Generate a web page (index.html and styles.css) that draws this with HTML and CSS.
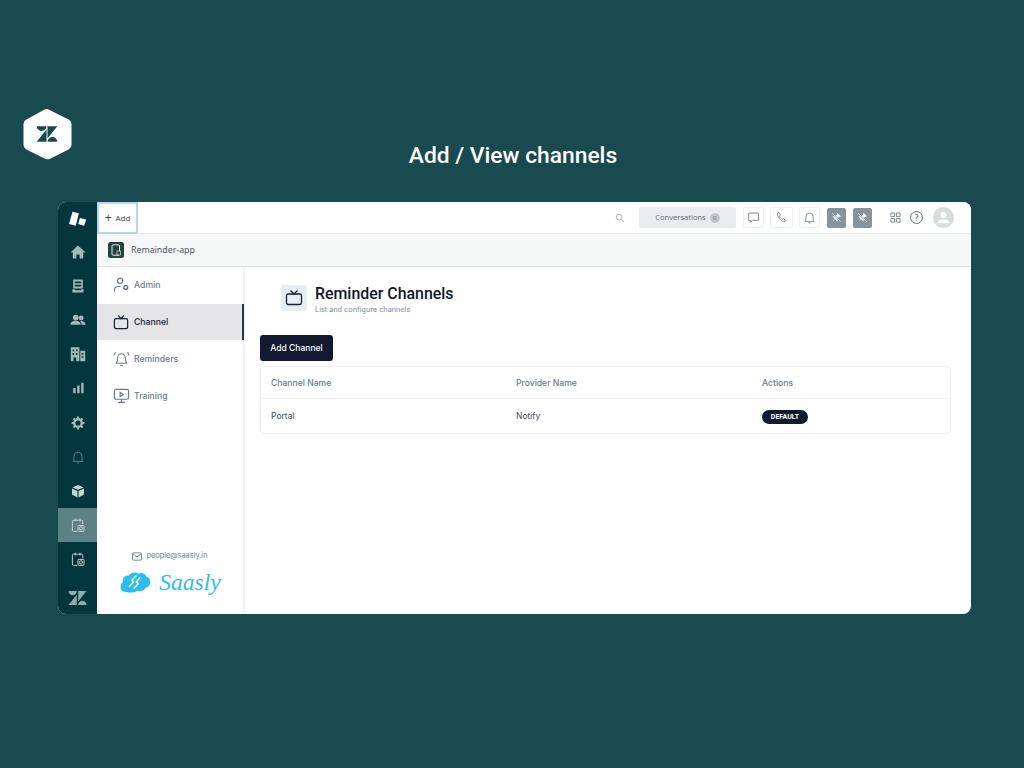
FILE: index.html
```html
<!DOCTYPE html>
<html lang="en">
<head>
<meta charset="utf-8">
<title>Add / View channels</title>
<link rel="stylesheet" href="styles.css">
</head>
<body>
<header class="hero">
  <svg class="hero-logo" viewBox="0 0 50 52"><path d="M25 0.500 47 11.500Q49.500 13 49.500 16V37Q49.500 40 47 41.500L27 51.500Q25 52 23 51.500L3 41.500Q0.500 40 0.500 37V16Q0.500 13 3 11.500L23 .5Z" fill="#fff"/><path d="M14 18h10a5 5 0 0 1-10 0zM24 21.500V34H14zM25 18h10L25 30.500zM25 34a5 5 0 0 1 10 0z" fill="#174a4f"/></svg>
  <h1 class="hero-title">Add / View channels</h1>
</header>
<main class="frame">
  <nav class="rail">
    <div class="rail-item rail-brand"><svg class="rb" viewBox="0 0 20 20"><path d="M4.500 2.800l6.400 1.400-3.200 12.600L1 15z" fill="#fff"/><path d="M11.900 9.100l6.300 1.400-2.100 6.300-5.900-1.800z" fill="#fff"/></svg></div>
    <div class="rail-item"><svg class="ri" viewBox="0 0 20 20"><path d="M10 2 19.500 10.500h-3V18h-4.500v-5H8v5H3.500v-7.500h-3z" fill="#a0b8b9"/></svg></div>
    <div class="rail-item"><svg class="ri" viewBox="0 0 20 20"><path d="M4 2h12v11H4zM6 4.500v2h8v-2zM6 8.500v2h8v-2zM3 14h3.500v1.200h7V14H17v4H3z" fill="#a0b8b9" fill-rule="evenodd"/></svg></div>
    <div class="rail-item"><svg class="ri" viewBox="0 0 20 20"><circle cx="7.200" cy="7" r="3.600" fill="#a0b8b9"/><circle cx="14" cy="7.500" r="3" fill="#a0b8b9"/><path d="M.5 16c0-3.500 3-5 6.700-5s6.300 1.500 6.300 5zM14.500 16c0-2-.8-3.500-2-4.600 3.500-.7 7 .8 7 4.600z" fill="#a0b8b9"/></svg></div>
    <div class="rail-item"><svg class="ri ri-lg" viewBox="0 0 20 20"><path d="M2 2.500h9.500V18H8v-4H5v4H2zM4 5v2h1.700V5zM7.700 5v2h1.700V5zM4 9v2h1.700V9zM7.700 9v2h1.700V9zM12.500 6.500H18V18h-5.500zM14 9v1.800h2V9zM14 12.500v1.800h2v-1.800z" fill="#a0b8b9" fill-rule="evenodd"/></svg></div>
    <div class="rail-item"><svg class="ri" viewBox="0 0 20 20"><path d="M4 10h3v6.500H4zM9 7h3v9.500H9zM14 3.500h3v13h-3z" fill="#a0b8b9"/></svg></div>
    <div class="rail-item rail-gear"><svg class="ri" viewBox="0 0 20 20"><circle cx="10" cy="10" r="4.700" fill="none" stroke="#a0b8b9" stroke-width="3"/><path d="M10 2v3M10 15v3M2 10h3M15 10h3M4.300 4.300l2 2M13.700 13.700l2 2M4.300 15.700l2-2M13.700 6.300l2-2" stroke="#a0b8b9" stroke-width="2.800"/></svg></div>
    <div class="rail-item"><svg class="ri" viewBox="0 0 20 20"><path d="M5 14.500V9a5 5 0 0 1 10 0v5.500l1.500 1h-13zM8.500 17.500h3" fill="none" stroke="#5d8285" stroke-width="1.200"/></svg></div>
    <div class="rail-item"><svg class="ri" viewBox="0 0 20 20"><path d="M10 2.500l7 3L10 8.500 3 5.500zM2.500 7l6.800 3v8l-6.800-3.500zM17.500 7l-6.800 3v8l6.800-3.500z" fill="#c4d3d4"/></svg></div>
    <div class="rail-item rail-active"><svg class="ri" viewBox="0 0 20 20"><use href="#cal"/></svg></div>
    <div class="rail-item"><svg class="ri" viewBox="0 0 20 20"><defs><g id="cal" fill="none" stroke="#c9d6d7" stroke-width="1.200"><path d="M9 18H4.500a1.500 1.500 0 0 1-1.500-1.500V5.500A1.500 1.500 0 0 1 4.500 4h10A1.500 1.500 0 0 1 16 5.500V9M6.500 2v3.500M12.500 2v3.500"/><rect x="10" y="10.500" width="7.500" height="7.500" rx="1.200"/><circle cx="13.700" cy="14.200" r="2"/></g></defs><use href="#cal"/></svg></div>
    <div class="rail-item rail-foot"><svg class="rz" viewBox="0 0 22 16"><path d="M10.200 4.200V16H.6zM10.200 0a4.800 4.800 0 0 1-9.600 0zM11.800 12V0h9.600zM11.800 16a4.800 4.800 0 0 1 9.600 0z" fill="#8fabad"/></svg></div>
  </nav>
  <div class="app">
    <div class="topbar">
      <div class="add-btn"><span class="plus">+</span> Add</div>
      <div class="top-tools">
        <svg class="search" viewBox="0 0 12 12"><circle cx="5" cy="5" r="3.500" fill="none" stroke="#a3a9ad" stroke-width="1"/><path d="M7.700 7.700 11 11" stroke="#a3a9ad" stroke-width="1"/></svg>
        <div class="conv">Conversations <span class="conv-count">0</span></div>
        <div class="tool"><svg class="ti" viewBox="0 0 16 16"><path d="M2 2.500h12v9H7l-2.500 2.500v-2.500H2z" fill="none" stroke="#68737d"/></svg></div>
        <div class="tool tool-wide"><svg class="ti" viewBox="0 0 16 16"><path d="M3 2.500 5 1.800l1.500 3-1.200 1.200c.5 2 2 3.500 3.700 4.300l1.300-1 2.800 2-.8 2c-4.500.5-9.500-5.500-9.300-10.800z" fill="none" stroke="#68737d" stroke-width=".9"/></svg></div>
        <div class="tool tool-last"><svg class="ti" viewBox="0 0 16 16"><path d="M3.500 12V7a4.500 4.500 0 0 1 9 0v5l1.300 1H2.200zM6.500 14.500h3" fill="none" stroke="#68737d" stroke-width=".9"/></svg></div>
        <div class="pin"><svg class="ti" viewBox="0 0 16 16"><path d="M9.500 2.500l4 4-1 .6-1-.3-2 2.200.2 2.500-1 1-2.600-2.700-2.600 2.700 2-3.300-2.200-2.200 1-1 2.500.3 2.200-2.100-.3-1z" fill="#fff"/><path d="M2.500 2.500l11 11" stroke="#87929d" stroke-width="1.800"/><path d="M2.500 2.500l11 11" stroke="#fff" stroke-width=".8"/></svg></div>
        <div class="pin"><svg class="ti" viewBox="0 0 16 16"><path d="M9.500 2.500l4 4-1 .6-1-.3-2 2.200.2 2.500-1 1-2.600-2.700-2.600 2.700 2-3.300-2.200-2.200 1-1 2.500.3 2.200-2.100-.3-1z" fill="#fff"/><path d="M2.500 2.500l11 11" stroke="#87929d" stroke-width="1.800"/><path d="M2.500 2.500l11 11" stroke="#fff" stroke-width=".8"/></svg></div>
        <svg class="grid-ico" viewBox="0 0 12 12"><path d="M1 1h4v4H1zM7 1h4v4H7zM1 7h4v4H1zM7 7h4v4H7z" fill="none" stroke="#68737d" stroke-width=".9"/></svg>
        <span class="help">?</span>
        <div class="avatar"><svg viewBox="0 0 22 22"><circle cx="11" cy="8.500" r="3.200" fill="#fff"/><path d="M5 17c0-3 2.500-4 6-4s6 1 6 4z" fill="#fff"/></svg></div>
      </div>
    </div>
    <div class="subbar">
      <svg class="app-ico" viewBox="0 0 16 16"><rect width="16" height="16" rx="2.500" fill="#24423f"/><rect x="4" y="2.800" width="7.500" height="10.400" rx="1.200" fill="none" stroke="#fff" stroke-width=".9"/><rect x="9" y="9" width="3.500" height="4" fill="#24423f" stroke="#fff" stroke-width=".6"/></svg>
      <span class="app-name">Remainder-app</span>
    </div>
    <div class="body">
      <aside class="side">
        <ul class="menu">
          <li class="menu-item"><svg class="mi" viewBox="0 0 18 18"><circle cx="7.500" cy="4" r="2.800" fill="none" stroke="#68778d" stroke-width="1.200"/><circle cx="13.500" cy="11" r="2" fill="none" stroke="#68778d" stroke-width="1.600"/><path d="M1.500 15.500v-1.500c0-2.500 2-4 4.500-4h2" fill="none" stroke="#68778d" stroke-width="1.200"/></svg><span>Admin</span></li>
          <li class="menu-item menu-on"><svg class="mi" viewBox="0 0 18 18"><rect x="1.500" y="5" width="14" height="10.500" rx="1.800" fill="none" stroke="#1a2233" stroke-width="1.300"/><path d="M5.500 1.500 8.500 5l3-3.500" fill="none" stroke="#1a2233" stroke-width="1.300"/></svg><span>Channel</span></li>
          <li class="menu-item"><svg class="mi" viewBox="0 0 18 18"><path d="M3.500 14c1.200-2 1.500-3 1.500-6a4 4 0 0 1 8 0c0 3 .3 4 1.500 6zM7.500 16.500h3M2.500 2.200 1 6M15.500 2.200 17 6" fill="none" stroke="#68778d" stroke-width="1.100"/></svg><span>Reminders</span></li>
          <li class="menu-item"><svg class="mi" viewBox="0 0 18 18"><rect x="1.500" y="2.500" width="15" height="10.500" rx="1.800" fill="none" stroke="#68778d" stroke-width="1.200"/><path d="M7.500 5.500v4.500l3.500-2.200z" fill="none" stroke="#68778d" stroke-width="1.100"/><path d="M9 13v3M5.500 16.300h7" stroke="#68778d" stroke-width="1.200"/></svg><span>Training</span></li>
        </ul>
        <div class="side-foot">
          <div class="mail"><svg class="mail-ico" viewBox="0 0 11 9"><rect x=".5" y=".5" width="10" height="8" rx="1" fill="none" stroke="#6b7a90"/><path d="M.8 1.500 5.500 5l4.700-3.500" fill="none" stroke="#6b7a90"/></svg>people@saasly.in</div>
          <div class="brand">
            <svg class="cloud" viewBox="0 0 34 26"><path d="M8 24C3 24 .5 21 .8 17.500 1 15.500 2 14 3.500 13 2.500 8.500 6 5.500 10 6 12 2.500 17 1.500 20.500 4c3-1.500 7-.5 8 3 3 1 5 3.500 4.500 7-.5 3-2.500 4.500-4.500 5-2 3.500-6 5-9.500 3.500C16 24.500 11 25 8 24z" fill="#2bbdee"/><path d="M18 6l-5 5 2 2-5 5M22 8l-4 5 2 2-5 5" fill="none" stroke="#fff" stroke-width="1.600"/></svg>
            <span class="brand-name">Saasly</span>
          </div>
        </div>
      </aside>
      <section class="content">
        <div class="page-head">
          <div class="page-ico"><svg viewBox="0 0 18 18"><rect x="1.500" y="5" width="15" height="10.500" rx="1.800" fill="none" stroke="#1a2233" stroke-width="1.300"/><path d="M5.500 1.500 9 5l3.500-3.500" fill="none" stroke="#1a2233" stroke-width="1.300"/></svg></div>
          <div>
            <h2 class="page-title">Reminder Channels</h2>
            <p class="page-sub">List and configure channels</p>
          </div>
        </div>
        <button class="primary">Add Channel</button>
        <div class="table">
          <div class="row row-head"><span>Channel Name</span><span>Provider Name</span><span>Actions</span></div>
          <div class="row row-body"><span>Portal</span><span>Notify</span><span><b class="badge">DEFAULT</b></span></div>
        </div>
      </section>
    </div>
  </div>
</main>
</body>
</html>
```
FILE: styles.css
```css
* { box-sizing: border-box; }
html, body { margin: 0; padding: 0; }
body { width: 1024px; height: 768px; background: #194a4f; overflow: hidden; font-family: Inter, "Liberation Sans", sans-serif; }

.hero { height: 202px; display: grid; grid-template-columns: 1fr auto 1fr; padding: 108px 0 0 2px; }
.hero-logo { grid-column: 1; grid-row: 1; width: 49px; height: 52px; display: block; margin-left: 21px; }
.hero-title { margin: 32.500px 0 0; grid-column: 2; grid-row: 1; font: 500 22.800px/30px Roboto, sans-serif; color: #fff; }

.frame { width: 913px; height: 412px; margin-left: 58px; display: flex; background: #fff; border-radius: 8px; overflow: hidden; }

.rail { width: 39px; flex: none; background: #03363d; display: flex; flex-direction: column; }
.rail-item { height: 34px; display: flex; align-items: center; justify-content: center; flex: none; }
.rail-brand { height: 33px; }
.rail-gear { height: 35px; }
.rail-active { background: #5d8285; }
.rail-foot { height: 34px; margin-top: 5px; }
.ri { width: 16px; height: 16px; }
.ri-lg { width: 18px; height: 18px; }
.rb { width: 20px; height: 20px; }
.rz { width: 19px; height: 14px; }

.app { flex: 1; display: flex; flex-direction: column; min-width: 0; }
.topbar { height: 32px; flex: none; display: flex; justify-content: space-between; background: #fff; border-bottom: 1px solid #e9ebed; }
.add-btn { width: 41px; height: 32px; border: 2px solid #b9d3ea; display: flex; align-items: center; justify-content: center; gap: 4px; font: 400 8px/1 "Open Sans", sans-serif; color: #3d4650; }
.plus { font-size: 12px; line-height: 12px; }
.top-tools { display: flex; align-items: center; padding-right: 17px; }
.search { width: 10px; height: 10px; margin-right: 14px; }
.conv { width: 97px; height: 21px; background: #e9ebed; border-radius: 2px; display: flex; align-items: center; justify-content: center; gap: 4px; font: 400 7.600px/1 "Open Sans", sans-serif; color: #5f6b75; margin-right: 7px; }
.conv-count { width: 10px; height: 10px; border-radius: 5px; background: #c2c8cc; font-size: 6px; line-height: 10px; text-align: center; }
.tool { width: 21px; height: 21px; border: 1px solid #f0f2f3; border-radius: 2px; display: flex; align-items: center; justify-content: center; margin-right: 6px; }
.tool-wide { width: 23px; }
.tool-last { margin-right: 7px; }
.ti { width: 13px; height: 13px; }
.pin { width: 19px; height: 20px; border-radius: 2px; background: #87929d; display: flex; align-items: center; justify-content: center; margin-right: 7px; }
.grid-ico { width: 11px; height: 11px; margin-left: 11px; margin-right: 9px; }
.help { width: 13px; height: 13px; border: 1px solid #68737d; border-radius: 50%; font: 400 9px/11px "Open Sans", sans-serif; text-align: center; color: #49545c; margin-right: 10px; }
.avatar { width: 21px; height: 21px; border-radius: 50%; background: #d8dcde; }
.avatar svg { display: block; width: 21px; height: 21px; }

.subbar { height: 33px; flex: none; display: flex; align-items: center; gap: 7px; padding-left: 11px; background: #f6f8f8; border-bottom: 1px solid #dfe2e3; }
.app-ico { width: 16px; height: 16px; }
.app-name { font: 400 8.800px/1 "Noto Sans", sans-serif; color: #4b5560; }

.body { flex: 1; display: flex; min-height: 0; }
.side { width: 148px; flex: none; border-right: 2px solid #f3f4f6; display: flex; flex-direction: column; justify-content: space-between; }
.menu { list-style: none; margin: 0; padding: 0; }
.menu-item { height: 36.700px; display: flex; align-items: center; gap: 4px; padding: 0 0 0 16px; font: 500 8.700px/1 Inter, sans-serif; color: #6b7a90; }
.menu-item span { padding-top: 1px; }
.menu-on { background: #e5e5e7; color: #1a2233; box-shadow: inset -2px 0 0 #2a3447; margin-right: -1px; }
.mi { width: 17px; height: 17px; }
.side-foot { display: flex; flex-direction: column; align-items: center; padding: 0 0 17px 0; }
.mail { display: flex; align-items: center; gap: 4px; font: 400 7.400px/10px Inter, sans-serif; color: #6b7a90; margin-bottom: 6px; }
.mail-ico { width: 10px; height: 9px; }
.brand { display: flex; align-items: center; gap: 7px; height: 30px; }
.cloud { width: 33px; height: 24px; }
.brand-name { font: italic 400 23.500px/30px "Liberation Serif", serif; color: #2bbdee; }

.content { flex: 1; padding: 18px 20px 0 15px; min-width: 0; }
.page-head { display: flex; gap: 8px; margin-left: 21px; }
.page-ico { width: 26px; height: 26px; border-radius: 3px; background: #e6eef3; display: flex; align-items: center; justify-content: center; }
.page-ico svg { width: 18px; height: 18px; }
.page-title { margin: -1px 0 0; font: 500 15.900px/19px Roboto, sans-serif; color: #0f172a; }
.page-sub { margin: 2px 0 0; font: 400 7.300px/10px Inter, sans-serif; color: #7c8a9e; }
.primary { display: block; width: 73px; height: 26px; margin-top: 20px; border: 0; border-radius: 3px; background: #111a2e; color: #fff; font: 500 8.500px/1 Inter, sans-serif; padding: 1px 0 0; }
.table { margin-top: 5px; height: 68px; border: 1px solid #eef0f3; border-radius: 5px; }
.row { display: grid; grid-template-columns: 245px 246px 1fr; padding-left: 10px; padding-top: 1px; align-items: center; }
.row-head { height: 32px; border-bottom: 1px solid #eef0f3; font: 500 8.600px/1 Inter, sans-serif; color: #6b7a90; }
.row-body { height: 34px; font: 400 8.500px/1 Inter, sans-serif; color: #3d4758; }
.badge { display: block; height: 14px; width: 46px; border-radius: 7px; background: #111a2e; color: #fff; font: 700 7px/14px Roboto, sans-serif; text-align: center; }
```
